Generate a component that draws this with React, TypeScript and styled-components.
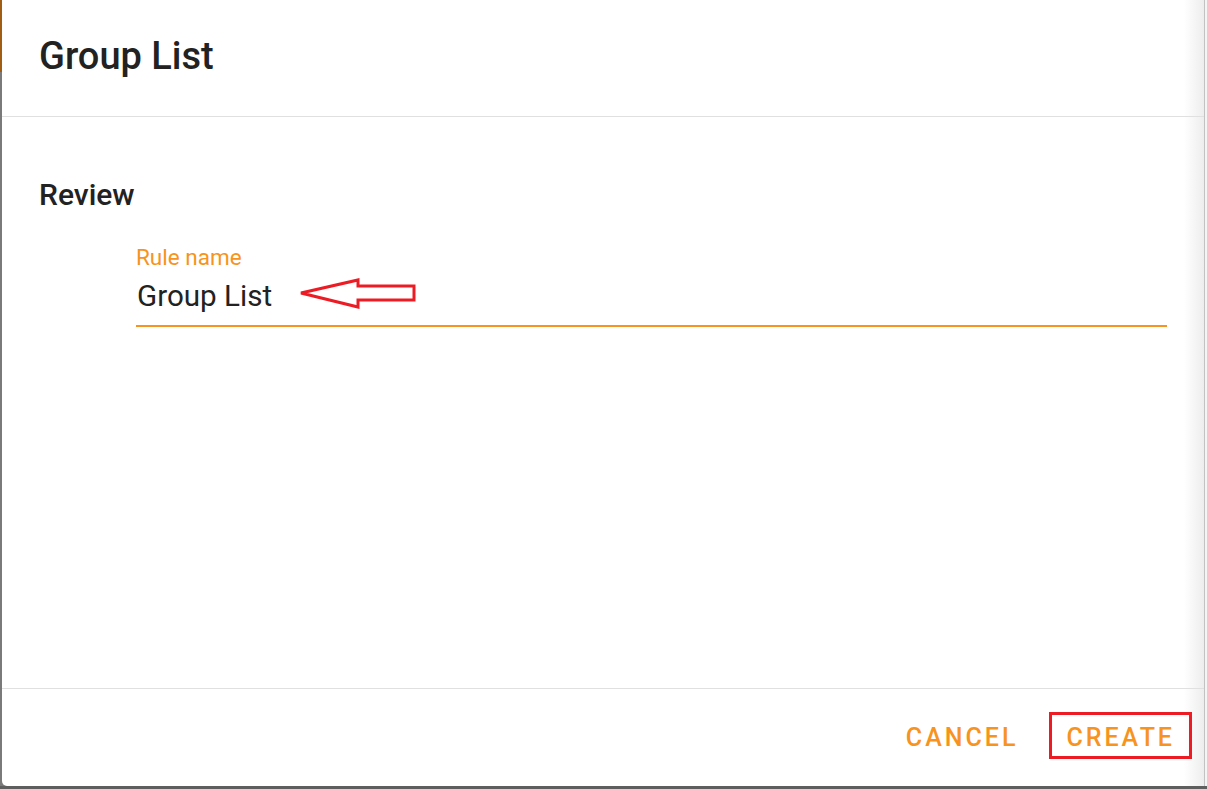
import React from "react";
import styled, { createGlobalStyle } from "styled-components";

const ORANGE = "#f7931e";
const RED = "#ed1c24";

const Global = createGlobalStyle`
  html, body { margin: 0; padding: 0; background: #fff; }
  body { font-family: Roboto, "Liberation Sans", Arial, sans-serif; }
  * { box-sizing: border-box; }
`;

const Page = styled.div`
  width: 1207px;
  height: 789px;
  display: grid;
  grid-template-columns: 2px 1fr 3px;
  grid-template-rows: 786px 3px;
  background: #7a7a7a;
  overflow: hidden;
`;

const LeftStrip = styled.div`
  background: linear-gradient(to bottom, #a15d14 0, #a15d14 72px, #7a7a7a 72px);
`;

const RightStrip = styled.div`
  border-left: 1px solid #c2c2c2;
  background: #f4f4f4;
`;

const BottomStrip = styled.div`
  grid-column: 1 / -1;
  background: #5e5e5e;
`;

const Dialog = styled.div`
  display: flex;
  flex-direction: column;
  background: linear-gradient(to right, #fff calc(100% - 20px), #ededed);
  border-bottom-left-radius: 5px;
  overflow: hidden;
`;

const Header = styled.div`
  height: 117px;
  padding: 37px 0 0 37px;
  border-bottom: 1px solid #e0e0e0;
`;

const Title = styled.h2`
  margin: 0;
  font-size: 38px;
  line-height: 1;
  font-weight: 500;
  color: #222;
`;

const Content = styled.div`
  flex: 1;
  display: flex;
  flex-direction: column;
  padding: 63px 37px 0 37px;
`;

const SectionTitle = styled.h3`
  margin: 0;
  font-size: 30px;
  line-height: 30px;
  font-weight: 500;
  color: #222;
`;

const Field = styled.div`
  position: relative;
  margin: 36px 0 0 97px;
  display: flex;
  flex-direction: column;
  padding-bottom: 14px;
  border-bottom: 2px solid ${ORANGE};
`;

const Label = styled.label`
  font-size: 22.5px;
  line-height: 22.5px;
  color: ${ORANGE};
`;

const Value = styled.div`
  margin-top: 13.5px;
  font-size: 29.6px;
  line-height: 29px;
  color: #222;
  padding-left: 1px;
`;

const Arrow = styled.svg`
  position: absolute;
  left: 160px;
  top: 28px;
`;

const Footer = styled.div`
  height: 98px;
  border-top: 1px solid #e0e0e0;
  display: flex;
  justify-content: flex-end;
  align-items: flex-start;
  gap: 14px;
  padding: 23px 12px 0 0;
`;

const Button = styled.button<{ $marked?: boolean }>`
  font-family: Roboto, "Liberation Sans", Arial, sans-serif;
  font-size: 25px;
  font-weight: 500;
  letter-spacing: 3px;
  line-height: 41px;
  height: 47px;
  padding: 2px 14px 0 14px;
  color: ${ORANGE};
  background: transparent;
  border: 3px solid ${(p) => (p.$marked ? RED : "transparent")};
  text-transform: uppercase;
  cursor: pointer;
`;

export default function App() {
  return (
    <>
      <Global />
      <Page>
        <LeftStrip />
        <Dialog>
          <Header>
            <Title>Group List</Title>
          </Header>
          <Content>
            <SectionTitle>Review</SectionTitle>
            <Field>
              <Label>Rule name</Label>
              <Value>Group List</Value>
              <Arrow width="124" height="40" viewBox="0 0 124 40">
                <polygon
                  points="5,19 62,6 62,12 118,12 118,26 62,26 62,33"
                  fill="none"
                  stroke={RED}
                  strokeWidth="3"
                  strokeLinejoin="miter"
                />
              </Arrow>
            </Field>
          </Content>
          <Footer>
            <Button>Cancel</Button>
            <Button $marked>Create</Button>
          </Footer>
        </Dialog>
        <RightStrip />
        <BottomStrip />
      </Page>
    </>
  );
}
